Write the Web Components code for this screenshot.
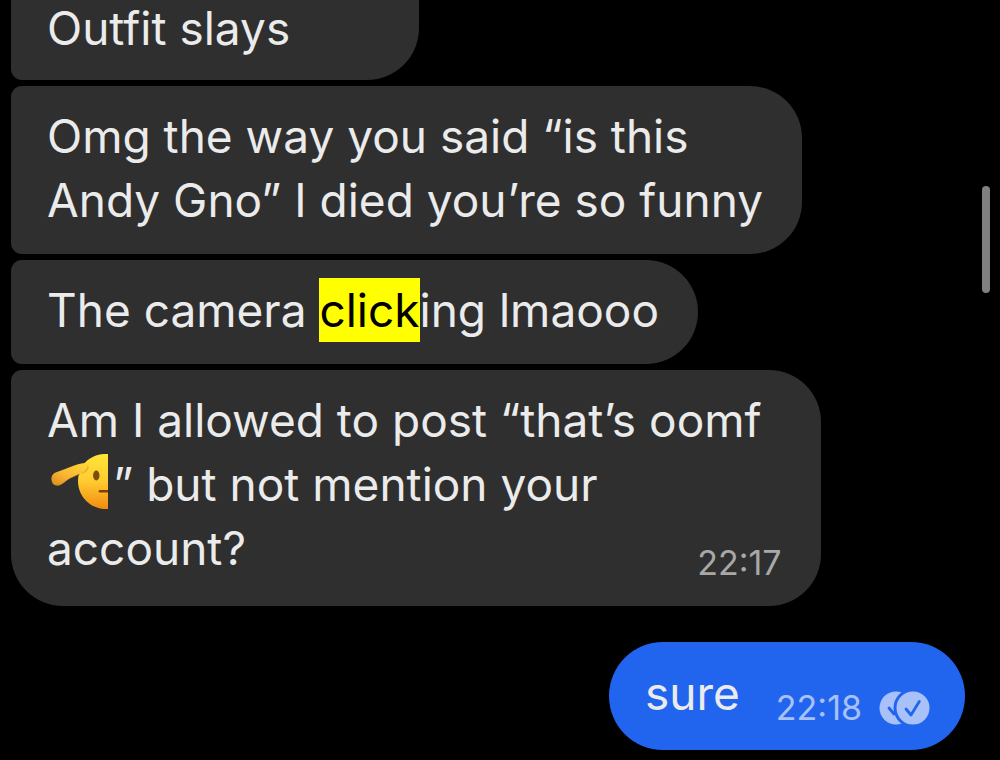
<!DOCTYPE html>
<html lang="en">
<head>
<meta charset="utf-8">
<title>Chat</title>
<style>
html, body { margin: 0; background: #000; }
</style>
</head>
<body>
<chat-view>
  <chat-bubble position="first" style="--tail: 90px">Outfit slays</chat-bubble>
  <chat-bubble position="middle">Omg the way you said “is this<br>Andy Gno” I died you’re so funny</chat-bubble>
  <chat-bubble position="middle">The camera <search-hit>click</search-hit>ing lmaooo</chat-bubble>
  <chat-bubble position="last" style="--tail: 20px">Am I allowed to post “that’s oomf<br><salute-face></salute-face>” but not mention your<br>account?<message-time slot="meta">22:17</message-time></chat-bubble>
  <chat-bubble position="sent">sure<message-time slot="meta">22:18 <read-receipt></read-receipt></message-time></chat-bubble>
</chat-view>
<script>
const define = (name, html) => customElements.define(name, class extends HTMLElement {
  constructor() {
    super();
    const t = document.createElement('template');
    t.innerHTML = html;
    this.attachShadow({ mode: 'open' }).append(t.content.cloneNode(true));
  }
});

define('chat-view', `
<style>
:host { display: grid; grid-template-columns: minmax(0, 1fr) 8px; column-gap: 17px; min-height: 100vh; box-sizing: border-box; padding: 0 10px 0 11px; background: #000; color: #ebebeb; font: 400 46px/64px Inter, "Liberation Sans", sans-serif; }
main { display: flex; flex-direction: column; align-items: flex-start; gap: 6px; }
.thumb { margin-top: 186px; height: 107px; border-radius: 4px; background: #808080; }
</style>
<main><slot></slot></main>
<div class="thumb"></div>`);

define('chat-bubble', `
<style>
:host { display: grid; flex: none; box-sizing: border-box; padding: 18px 39px 22px 36px; background: #2f2f2f; border-radius: 11px 52px 52px 11px; white-space: nowrap; }
:host([position="first"]) { line-height: 56px; padding-top: 0; padding-bottom: 24px; border-top-left-radius: 0; border-top-right-radius: 0; }
:host([position="last"]) { padding-bottom: 26px; border-bottom-left-radius: 52px; }
:host([position="sent"]) { align-self: flex-end; grid-template-columns: auto auto; column-gap: 36px; margin-top: 30px; padding: 19px 35px 25px 36px; border-radius: 54px; background: #2165ef; --meta: #a9c1f9; }
.text, .meta { grid-area: 1 / 1; }
.text { padding-right: var(--tail, 0); }
.meta { place-self: end; }
:host([position="sent"]) .meta { grid-area: 1 / 2; }
</style>
<div class="text"><slot></slot></div>
<div class="meta"><slot name="meta"></slot></div>`);

define('search-hit', `
<style>
:host { display: inline; }
mark { display: inline-block; background: #ff0; color: #000; }
</style>
<mark><slot></slot></mark>`);

define('message-time', `
<style>
:host { display: flex; align-items: center; gap: 17px; font-size: 34px; line-height: 34px; color: var(--meta, #a8a8a8); }
</style>
<slot></slot>`);

define('read-receipt', `
<style>
:host { display: block; }
svg { display: block; }
</style>
<svg width="51" height="34" viewBox="0 0 51 34" role="img" aria-label="Read">
  <circle cx="17" cy="17" r="16.5" fill="#a9c1f9"/>
  <path d="M10 17l5 6 8-13" fill="none" stroke="#2165ef" stroke-width="2.8" stroke-linecap="round" stroke-linejoin="round"/>
  <circle cx="34" cy="17" r="18" fill="#a9c1f9" stroke="#2165ef" stroke-width="3"/>
  <path d="M27 18l5 6 8.300-13.500" fill="none" stroke="#2165ef" stroke-width="2.8" stroke-linecap="round" stroke-linejoin="round"/>
</svg>`);

define('salute-face', `
<style>
:host { display: inline-block; vertical-align: -9px; margin: 0 5px 0 4px; }
svg { display: block; }
</style>
<svg width="57" height="56" viewBox="0 0 57 56" role="img" aria-label="Saluting face">
  <defs>
    <linearGradient id="face" x1="0" y1="0" x2="0" y2="1"><stop offset="0" stop-color="#ffe638"/><stop offset=".5" stop-color="#ffcb30"/><stop offset="1" stop-color="#f28a12"/></linearGradient>
    <linearGradient id="hand" x1="0" y1="1" x2="1" y2="0"><stop offset="0" stop-color="#d98a1c"/><stop offset=".4" stop-color="#f7b433"/><stop offset="1" stop-color="#ffd93a"/></linearGradient>
  </defs>
  <path d="M57 0C40-1 27 11 27 27s13 29 30 28z" fill="url(#face)"/>
  <path d="M30 20c4-1 7-3 8-7l-3-4z" fill="#e08a1c" opacity=".5"/>
  <path d="M36 9C30 9 24 11 18 13.500L6 18C2 19 0 22 .5 26c.5 4 3 6 7 5.500C12 30.500 15 26 20 24l8-4c4-1 6-3 8-6 1-3 1-5 0-5z" fill="url(#hand)"/>
  <path d="M5 31c5 1 9-4 14-7l10-4" fill="none" stroke="#c8791a" stroke-width="1" opacity=".6"/>
  <ellipse cx="45.300" cy="21.500" rx="3.200" ry="5" fill="#7c4c0c"/>
  <path d="M49 37.300h8" stroke="#7c4209" stroke-width="2.600" stroke-linecap="round"/>
</svg>`);
</script>
</body>
</html>
